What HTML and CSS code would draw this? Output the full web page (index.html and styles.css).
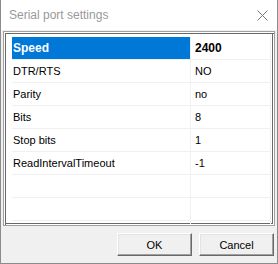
FILE: index.html
```html
<!DOCTYPE html>
<html>
<head>
<meta charset="utf-8">
<title>Serial port settings</title>
<link rel="stylesheet" href="styles.css">
</head>
<body>

<div class="window">
    <div class="titlebar">
        <span class="title">Serial port settings</span>
        <svg class="close" width="11" height="11" viewBox="0 0 11 11">
            <path d="M0.5 0.5 L10.5 10.5 M10.5 0.5 L0.5 10.5" stroke="#777" stroke-width="1" fill="none"/>
        </svg>
    </div>
    <div class="client">
        <div class="grid">
            <div class="rows">
                <div class="row selected">
                    <div class="name">Speed</div>
                    <div class="value">2400</div>
                </div>
                <div class="row">
                    <div class="name">DTR/RTS</div>
                    <div class="value">NO</div>
                </div>
                <div class="row">
                    <div class="name">Parity</div>
                    <div class="value">no</div>
                </div>
                <div class="row">
                    <div class="name">Bits</div>
                    <div class="value">8</div>
                </div>
                <div class="row">
                    <div class="name">Stop bits</div>
                    <div class="value">1</div>
                </div>
                <div class="row">
                    <div class="name">ReadIntervalTimeout</div>
                    <div class="value">-1</div>
                </div>
                <div class="row">
                    <div class="name"></div>
                    <div class="value"></div>
                </div>
                <div class="row">
                    <div class="name"></div>
                    <div class="value"></div>
                </div>
                <div class="row">
                    <div class="name"></div>
                    <div class="value"></div>
                </div>
            </div>
        </div>
        <div class="buttons">
            <button class="btn">OK</button>
            <button class="btn">Cancel</button>
        </div>
    </div>
</div>

</body>
</html>
```

FILE: styles.css
```css
body {
    margin: 0;
    padding: 0;
    font: 11px "Liberation Sans", Arial, sans-serif;
    color: #000;
}
.window {
    width: 278px;
    height: 264px;
    box-sizing: border-box;
    border: 1px solid #8c8c8c;
    border-top: none;
    background: #f0f0f0;
    display: flex;
    flex-direction: column;
}
.titlebar {
    height: 30px;
    flex: none;
    background: #fff;
    display: flex;
    align-items: center;
    justify-content: space-between;
}
.title {
    margin: 0 0 0 8px;
    font-size: 12px;
    color: #999;
}
.close {
    margin: 0 9px 0 0;
}
.client {
    flex: 1;
    padding: 1px 2px 0 2px;
}
.grid {
    height: 195px;
    box-sizing: border-box;
    border: 1px solid #a0a0a0;
    box-shadow: inset 1px 1px 0 #fff, inset 2px 2px 0 #696969, inset -1px -1px 0 #fff, inset -2px -2px 0 #696969;
    padding: 3px 3px 0 3px;
    background: #fff;
    overflow: hidden;
}
.rows {
    height: 189px;
    overflow: hidden;
    padding: 2px 0 0 5px;
    box-sizing: border-box;
    border-right: 1px solid #f0f0f0;
}
.row {
    display: flex;
    height: 22px;
    line-height: 22px;
    border-bottom: 1px solid #f0f0f0;
}
.name {
    width: 179px;
    padding: 0 0 0 1px;
    box-sizing: border-box;
    border-right: 1px solid #f0f0f0;
    white-space: nowrap;
}
.value {
    flex: 1;
    padding: 0 0 0 4px;
}
.selected {
    font-size: 12px;
    font-weight: bold;
}
.selected .name {
    background: #0078d7;
    color: #fff;
}
.buttons {
    display: flex;
    justify-content: flex-end;
    gap: 7px;
    margin: 7px 1px 0 0;
}
.btn {
    width: 75px;
    height: 23px;
    padding: 0;
    font: 11px "Liberation Sans", Arial, sans-serif;
    color: #000;
    background: #f0f0f0;
    border: 1px solid;
    border-color: #fff #696969 #696969 #fff;
    box-shadow: inset -1px -1px 0 #a0a0a0, inset 1px 1px 0 #e3e3e3;
}
```
